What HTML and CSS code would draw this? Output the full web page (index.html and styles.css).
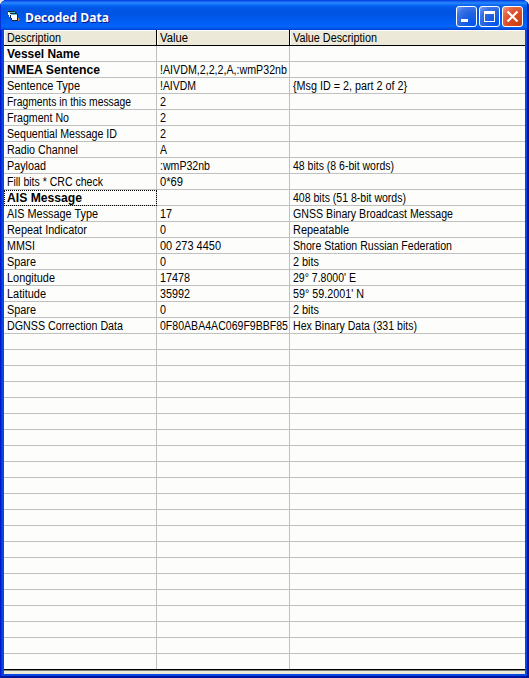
FILE: index.html
```
<!DOCTYPE html>
<html lang="en">
<head>
<meta charset="utf-8">
<title>Decoded Data</title>
<link rel="stylesheet" href="styles.css">
</head>
<body>
<main class="window">
  <header class="titlebar">
    <svg class="app-icon" width="14" height="13" viewBox="0 0 14 13" shape-rendering="crispEdges">
      <path fill="#b08058" d="M10 8h1v1h1v1h-1v1h-1z"/>
      <path fill="#fff" d="M0 2h7v6H2V7H1V5H0zM2 4h7v6H4V9H3V7H2z"/>
      <path fill="#102838" d="M0 1h7v1H0zM7 2h1v1H7zM2 3h7v1H2zM9 4h1v7H9zM4 10h5v1H4zM2 5h1v3H2zM3 8h1v2H3z"/>
      <path fill="#58c8c8" d="M1 2h6v1H1zM3 4h6v1H3z"/>
    </svg>
    <h1 class="title"><span>Decoded Data</span></h1>
    <div class="controls">
      <button class="control" aria-label="Minimize"><svg width="21" height="21"><path fill="#fff" d="M5 13h7v3H5z"/></svg></button>
      <button class="control" aria-label="Maximize"><svg width="21" height="21"><path fill="#fff" fill-rule="evenodd" d="M5 5h11v11H5zM6 8v7h9V8z"/></svg></button>
      <button class="control close" aria-label="Close"><svg width="21" height="21"><path fill="none" stroke="#fff" stroke-width="2.2" d="M5.500 5.500l10 10M15.500 5.500l-10 10"/></svg></button>
    </div>
  </header>
  <div class="grid" id="grid">
    <div class="row head"><div><span>Description</span></div><div><span>Value</span></div><div><span>Value Description</span></div></div>
  </div>
</main>
<script src="grid.js"></script>
</body>
</html>
```
FILE: styles.css
```
* { box-sizing: border-box; }
body {
  margin: 0;
  background: #ece9d8;
  font-family: "Liberation Sans", Arial, sans-serif;
}
.window {
  width: 529px;
  height: 678px;
  display: flex;
  flex-direction: column;
  padding: 0 4px 4px;
  border-radius: 7px 7px 0 0;
  overflow: hidden;
  background: #0848e0;
  box-shadow: inset 1px 0 #0019cf, inset -2px 0 #00139c, inset 0 -2px #00139c, inset 2px 0 #0831d9;
}
.titlebar {
  flex: none;
  height: 30px;
  margin: 0 -4px;
  padding: 2px 6px 0 8px;
  display: flex;
  align-items: center;
  background: linear-gradient(to bottom, #0831d9 0, #0a5bee 1px, #2a88ff 3px, #0968f2 5px, #0057e6 8px, #0054e3 14px, #005bf0 20px, #0064fb 26px, #005bec 28px, #003dd0 30px);
  box-shadow: inset 1px 0 #0831d9, inset -2px 0 #0029b8;
}
.app-icon { flex: none; }
.title {
  margin: 1px auto 0 3px;
  color: #fff;
  font-family: "Open Sans", "Noto Sans", sans-serif;
  font-size: 13px;
  line-height: 16px;
  font-weight: 700;
  text-shadow: 1px 1px #0a1883;
}
.title span { display: inline-block; transform-origin: 0 0; }
.controls { display: flex; gap: 2px; }
.control {
  width: 21px;
  height: 21px;
  padding: 0;
  border: 1px solid #fff;
  border-radius: 3px;
  background: radial-gradient(circle at 85% 90%, #0055f0 0, #2463e0 50%, #3c74e8 75%, #80a4f0 100%);
}
.control svg { display: block; margin: -1px; }
.control.close { background: radial-gradient(circle at 85% 90%, #cc4010 0, #dc4a24 50%, #e46848 75%, #f0a08c 100%); }
.grid {
  flex: 1;
  display: flex;
  flex-direction: column;
  background: #ece9d8;
}
.row {
  height: 16px;
  display: grid;
  grid-template-columns: 153px 133px 235px;
  background: #fdfefc;
  color: #000;
  font-size: 12px;
  line-height: 17px;
  white-space: nowrap;
}
.row > div {
  height: 16px;
  border-right: 1px solid #c0c0c0;
  border-bottom: 1px solid #c0c0c0;
  padding-left: 3px;
  min-width: 0;
}
.row > div:last-child { border-right: 0; }
.row span { display: inline-block; transform-origin: 0 0; }
.row.head { background: #ece9d8; }
.row.head > div { border-color: #000; box-shadow: inset 1px 1px #fff; }
.bold > div:first-child { font-weight: 700; }
.row > div.focused { outline: 1px dotted #000; outline-offset: -1px; }
.row:last-child { border-bottom: 1px solid #000; box-shadow: 0 1px #808080; }
.row:last-child > div { height: 15px; border-bottom: 0; }
```
FILE: grid.js
```
// label, value, description, label width, value width, description width
const rows = [
  ["Vessel Name", "", "", 73],
  ["NMEA Sentence", "!AIVDM,2,2,2,A,:wmP32nb", "", 93, 127],
  ["Sentence Type", "!AIVDM", "{Msg ID = 2, part 2 of 2}", 73, 36, 114],
  ["Fragments in this message", "2", "", 124, 6],
  ["Fragment No", "2", "", 62, 6],
  ["Sequential Message ID", "2", "", 110, 6],
  ["Radio Channel", "A", "", 71, 7],
  ["Payload", ":wmP32nb", "48 bits (8 6-bit words)", 39, 50, 101],
  ["Fill bits * CRC check", "0*69", "", 96, 23],
  ["AIS Message", "", "408 bits (51 8-bit words)", 75, 0, 113],
  ["AIS Message Type", "17", "GNSS Binary Broadcast Message", 91, 12, 160],
  ["Repeat Indicator", "0", "Repeatable", 80, 6, 56],
  ["MMSI", "00 273 4450", "Shore Station Russian Federation", 28, 61, 159],
  ["Spare", "0", "2 bits", 29, 6, 26],
  ["Longitude", "17478", "29° 7.8000' E", 48, 30, 63],
  ["Latitude", "35992", "59° 59.2001' N", 39, 30, 71],
  ["Spare", "0", "2 bits", 29, 6, 26],
  ["DGNSS Correction Data", "0F80ABA4AC069F9BBF85", "Hex Binary Data (331 bits)", 116, 128, 124]
];
const ROW_COUNT = 39;
const grid = document.getElementById("grid");

function fit(span, width) {
  span.style.transform = `scaleX(${width / span.getBoundingClientRect().width})`;
}

for (let r = 0; r < ROW_COUNT; r++) {
  const data = rows[r] || ["", "", ""];
  const row = document.createElement("div");
  row.className = "row";
  if (r < 2 || r === 9) row.classList.add("bold");
  grid.append(row);
  for (let c = 0; c < 3; c++) {
    const cell = document.createElement("div");
    if (r === 9 && c === 0) cell.className = "focused";
    row.append(cell);
    if (!data[c]) continue;
    const span = document.createElement("span");
    span.textContent = data[c];
    cell.append(span);
    fit(span, data[c + 3]);
  }
}
const widths = [54, 28, 84];
document.querySelectorAll(".head span").forEach((span, i) => fit(span, widths[i]));
fit(document.querySelector(".title span"), 84);
```
